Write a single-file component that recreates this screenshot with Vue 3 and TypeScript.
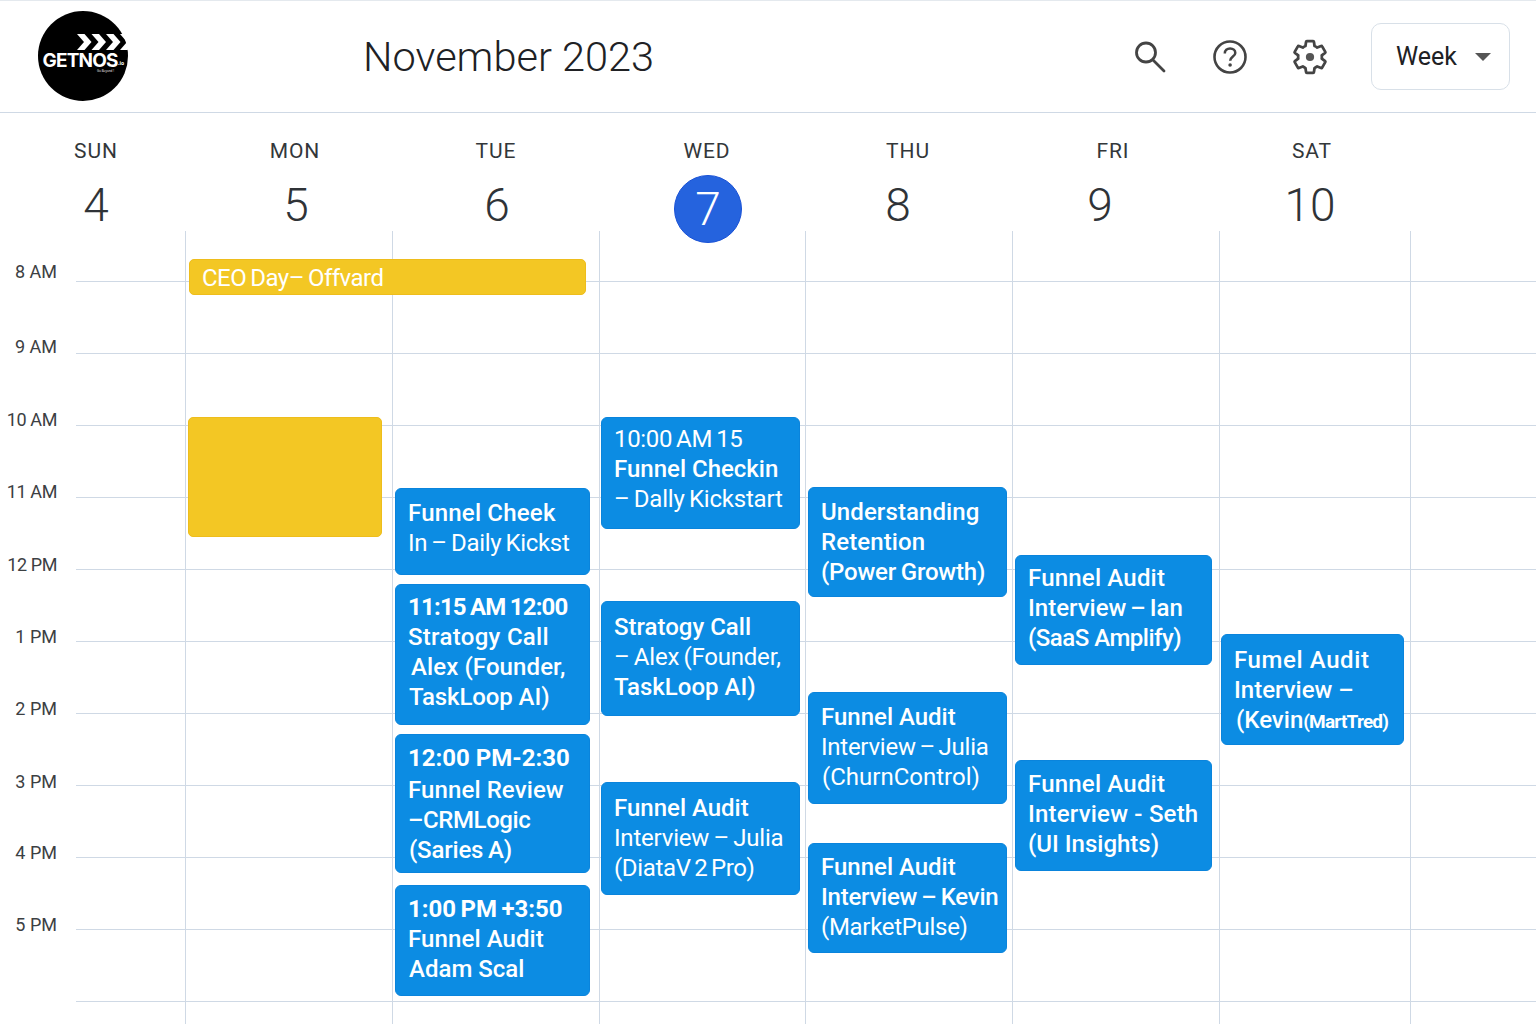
<script setup lang="ts">
interface Line { t: string; bold?: boolean; light?: boolean; small?: string; indent?: number; ls?: number; ws?: number; gap?: number }
interface Ev { x: number; y: number; w: number; h: number; color: 'blue' | 'yellow'; dy?: number; lines: Line[] }

const days = [
  { label: 'SUN', num: '4', nudge: 0 },
  { label: 'MON', num: '5', nudge: 1 },
  { label: 'TUE', num: '6', nudge: 1 },
  { label: 'WED', num: '7', nudge: 1, today: true },
  { label: 'THU', num: '8', nudge: -10 },
  { label: 'FRI', num: '9', nudge: -13 },
  { label: 'SAT', num: '10', nudge: -2 },
]

const hours = [
  { label: '8 AM', h: 50, up: 0 },
  { label: '9 AM', h: 72, up: -3 },
  { label: '10 AM', h: 72, up: -4 },
  { label: '11 AM', h: 72, up: -4 },
  { label: '12 PM', h: 72, up: -5 },
  { label: '1 PM', h: 72, up: -5 },
  { label: '2 PM', h: 72, up: -5 },
  { label: '3 PM', h: 72, up: -6 },
  { label: '4 PM', h: 72, up: -5 },
  { label: '5 PM', h: 72, up: -5 },
  { label: '', h: 72, up: 0 },
]

const events: Ev[] = [
  { x: 189, y: 259, w: 397, h: 36, color: 'yellow', lines: [{ t: 'CEO Day– Offvard', light: true, ws: -1.5, ls: -0.5 }] },
  { x: 188, y: 417, w: 194, h: 120, color: 'yellow', lines: [] },
  { x: 395, y: 488, w: 195, h: 87, color: 'blue', lines: [{ t: 'Funnel Cheek', ls: 0.2 }, { t: 'In – Daily Kickst', light: true, ws: -1.5, ls: -0.3 }] },
  { x: 395, y: 584, w: 195, h: 141, color: 'blue', dy: -2, lines: [{ t: '11:15 AM 12:00', bold: true, ls: -0.8, ws: -1 }, { t: 'Stratogy Call', ls: 0.3 }, { t: 'Alex (Founder,', indent: 3, ls: 0.1 }, { t: 'TaskLoop AI)', indent: 1, ls: -0.1 }] },
  { x: 395, y: 734, w: 195, h: 139, color: 'blue', dy: -1, lines: [{ t: '12:00 PM-2:30', bold: true, gap: 2 }, { t: 'Funnel Review', ls: 0.1 }, { t: '–CRMLogic', ls: -0.4 }, { t: '(Saries A)', indent: 1, ws: -1, ls: -0.2 }] },
  { x: 395, y: 885, w: 195, h: 111, color: 'blue', dy: -1, lines: [{ t: '1:00 PM +3:50', bold: true, ws: -1.5 }, { t: 'Funnel Audit', ls: 0.1 }, { t: 'Adam Scal', indent: 1 }] },
  { x: 601, y: 417, w: 199, h: 112, color: 'blue', dy: -3, lines: [{ t: '10:00 AM 15', light: true, ws: -1.5, ls: -0.35 }, { t: 'Funnel Checkin' }, { t: '– Dally Kickstart', light: true, ws: -1.5, ls: -0.2 }] },
  { x: 601, y: 601, w: 199, h: 115, color: 'blue', dy: 1, lines: [{ t: 'Stratogy Call' }, { t: '– Alex (Founder,', light: true, ws: -1.5, ls: -0.2 }, { t: 'TaskLoop AI)' }] },
  { x: 601, y: 782, w: 199, h: 113, color: 'blue', dy: 1, lines: [{ t: 'Funnel Audit' }, { t: 'Interview – Julia', light: true, ws: -1.5, ls: -0.2 }, { t: '(DiataV 2 Pro)', light: true, ws: -2, ls: -0.35 }] },
  { x: 808, y: 487, w: 199, h: 110, color: 'blue', lines: [{ t: 'Understanding', ls: 0.1 }, { t: 'Retention', ls: 0.1 }, { t: '(Power Growth)', ws: -1, ls: -0.2 }] },
  { x: 808, y: 692, w: 199, h: 112, color: 'blue', lines: [{ t: 'Funnel Audit' }, { t: 'Interview – Julia', light: true, ws: -2, ls: -0.25 }, { t: '(ChurnControl)', light: true, indent: 1 }] },
  { x: 808, y: 843, w: 199, h: 110, color: 'blue', dy: -1, lines: [{ t: 'Funnel Audit' }, { t: 'Interview – Kevin', ws: -1.5, ls: -0.25 }, { t: '(MarketPulse)', light: true, ls: -0.3 }] },
  { x: 1015, y: 555, w: 197, h: 110, color: 'blue', dy: -2, lines: [{ t: 'Funnel Audit', ls: 0.2 }, { t: 'Interview – Ian', ws: -2 }, { t: '(SaaS Amplify)', ls: -0.5 }] },
  { x: 1015, y: 760, w: 197, h: 111, color: 'blue', dy: -1, lines: [{ t: 'Funnel Audit', ls: 0.2 }, { t: 'Interview - Seth', ls: 0.2 }, { t: '(UI Insights)' }] },
  { x: 1221, y: 634, w: 183, h: 111, color: 'blue', dy: 1, lines: [{ t: 'Fumel Audit', ls: 0.6 }, { t: 'Interview –' }, { t: '(Kevin', small: '(MartTred)', indent: 2 }] },
]

const GRID_TOP = 232
const evStyle = (e: Ev) => ({
  left: e.x + 'px',
  top: e.y - GRID_TOP + 'px',
  width: e.w + 'px',
  height: e.h + 'px',
  paddingTop: (e.color === 'blue' ? 9 : 3) + (e.dy ?? 0) + 'px',
})
const lnStyle = (ln: Line) => ({
  paddingLeft: ln.indent ? ln.indent + 'px' : undefined,
  letterSpacing: ln.ls ? ln.ls + 'px' : undefined,
  wordSpacing: ln.ws ? ln.ws + 'px' : undefined,
  marginBottom: ln.gap ? ln.gap + 'px' : undefined,
})
</script>

<template>
  <div class="page">
    <header class="top">
      <svg class="logo" width="92" height="92" viewBox="0 0 92 92" aria-label="GETNOS logo">
        <circle cx="46" cy="46" r="45" fill="#000" />
        <g fill="#fff">
          <path d="M40 24h7.5l7 8-7 8H40l7-8z" />
          <path d="M54.5 24H62l7 8-7 8h-7.5l7-8z" />
          <path d="M69 24h7.5l7 8-7 8H69l7-8z" />
          <path d="M83 24h7.5l7 8-7 8H83l7-8z" />
        </g>
        <text x="5.5" y="56.5" class="logo-main">GETNOS</text>
        <text x="81" y="55" class="logo-io">.io</text>
        <text x="60" y="62" class="logo-tag">Go Beyond !</text>
      </svg>
      <h1 class="title">November 2023</h1>
      <div class="tools">
        <svg class="icon" width="36" height="36" viewBox="0 0 36 36" fill="none" stroke="#444" stroke-width="2.8">
          <circle cx="14" cy="13.5" r="9.5" />
          <path d="M21 21l11 11" stroke-linecap="round" />
        </svg>
        <svg class="icon" width="36" height="36" viewBox="0 0 36 36" fill="none" stroke="#444">
          <circle cx="18" cy="18" r="15.5" stroke-width="2.6" />
          <path d="M12.8 14.4c0-3 2.3-5 5.3-5 3 0 5.2 1.9 5.2 4.5 0 3.6-5.1 3.8-5.1 7.9" stroke-width="2.5" />
          <circle cx="18.1" cy="26" r="1.8" fill="#444" stroke="none" />
        </svg>
        <svg class="icon" width="38" height="38" viewBox="0 0 24 24" fill="none" stroke="#444" stroke-width="1.75" stroke-linejoin="round">
          <path d="M19.43 12.98c.04-.32.07-.64.07-.98 0-.34-.03-.66-.07-.98l2.11-1.65c.19-.15.24-.42.12-.64l-2-3.46c-.12-.22-.39-.3-.61-.22l-2.49 1c-.52-.4-1.08-.73-1.69-.98l-.38-2.65C14.46 2.18 14.25 2 14 2h-4c-.25 0-.46.18-.49.42l-.38 2.65c-.61.25-1.17.59-1.69.98l-2.49-1c-.23-.09-.49 0-.61.22l-2 3.46c-.13.22-.07.49.12.64l2.11 1.65c-.04.32-.07.65-.07.98 0 .33.03.66.07.98l-2.11 1.65c-.19.15-.24.42-.12.64l2 3.46c.12.22.39.3.61.22l2.49-1c.52.4 1.08.73 1.69.98l.38 2.65c.03.24.24.42.49.42h4c.25 0 .46-.18.49-.42l.38-2.65c.61-.25 1.17-.59 1.69-.98l2.49 1c.23.09.49 0 .61-.22l2-3.46c.12-.22.07-.49-.12-.64l-2.11-1.65z" />
          <circle cx="12" cy="12" r="2.6" fill="#555" stroke="none" />
        </svg>
        <button class="view">
          <span>Week</span>
          <svg width="16" height="8" viewBox="0 0 16 8"><path d="M0 0h16l-8 8z" fill="#555" /></svg>
        </button>
      </div>
    </header>

    <div class="days">
      <div v-for="d in days" :key="d.label" class="day">
        <div class="day-label">{{ d.label }}</div>
        <div class="day-num" :class="{ today: d.today }" :style="{ transform: `translateX(${d.nudge}px)` }">{{ d.num }}</div>
      </div>
    </div>

    <div class="grid">
      <div v-for="(h, i) in hours" :key="i" class="hour" :style="{ height: h.h + 'px' }">
        <div class="hour-label" :class="{ wide: h.label.length > 4 }" :style="{ transform: `translateY(${-h.up}px)` }">{{ h.label }}</div>
        <div class="hour-line"></div>
      </div>
      <div class="cols">
        <div class="col"></div>
        <div class="col"></div>
        <div class="col"></div>
        <div class="col"></div>
        <div class="col"></div>
        <div class="col"></div>
        <div class="col"></div>
      </div>
      <div
        v-for="(e, i) in events"
        :key="i"
        class="event"
        :class="e.color"
        :style="evStyle(e)"
      >
        <div
          v-for="(ln, j) in e.lines"
          :key="j"
          class="ln"
          :class="{ bold: ln.bold, light: ln.light }"
          :style="lnStyle(ln)"
        >{{ ln.t }}<span v-if="ln.small" class="small">{{ ln.small }}</span></div>
      </div>
    </div>
  </div>
</template>

<style>
html, body { margin: 0; background: #fff; }
</style>

<style scoped>
.page {
  width: 1536px;
  height: 1024px;
  overflow: hidden;
  background: #fff;
  font-family: Roboto, "Liberation Sans", sans-serif;
  color: #3c4043;
}
.top {
  height: 113px;
  box-sizing: border-box;
  border-top: 1px solid #e4e9ee;
  border-bottom: 1px solid #cfd9e5;
  display: flex;
  align-items: center;
  padding-left: 37px;
  padding-right: 26px;
}
.logo { flex: none; margin-bottom: 2px; }
.logo-main {
  font: 700 19px Inter, "Open Sans", sans-serif;
  letter-spacing: -0.8px;
  fill: #fff;
}
.logo-io { font: 700 5px "Open Sans", sans-serif; fill: #fff; }
.logo-tag { font: 400 3px "Open Sans", sans-serif; fill: #fff; }
.title {
  margin: 0 0 0 234px;
  font-size: 41.5px;
  font-weight: 300;
  color: #202124;
  white-space: nowrap;
}
.tools {
  margin-left: auto;
  display: flex;
  align-items: center;
}
.icon { flex: none; }
.icon:nth-child(1) { margin-right: 44px; }
.icon:nth-child(2) { margin-right: 43px; }
.icon:nth-child(3) { margin-right: 42px; }
.view {
  width: 139px;
  height: 67px;
  box-sizing: border-box;
  border: 1px solid #d8e0e8;
  border-radius: 10px;
  background: #fff;
  font: 400 25px Roboto, sans-serif;
  color: #202124;
  display: flex;
  align-items: center;
  justify-content: space-between;
  padding: 0 18px 0 24px;
}
.days {
  height: 119px;
  display: grid;
  grid-template-columns: 192px 206px 196px 226px 176px 234px 164px;
}
.day {
  display: flex;
  flex-direction: column;
  align-items: center;
  padding-top: 25px;
  box-sizing: border-box;
}
.day-label {
  font-size: 21px;
  line-height: 26px;
  letter-spacing: 0.9px;
  color: #33373a;
}
.day-num {
  width: 68px;
  height: 68px;
  margin-top: 11px;
  display: flex;
  align-items: center;
  justify-content: center;
  font-size: 46px;
  font-weight: 300;
  color: #2f3337;
  box-sizing: border-box;
  padding-bottom: 8px;
}
.day-num.today {
  background: #2563de;
  border: 1px solid #1a52d6;
  border-radius: 50%;
  color: #fff;
  padding-bottom: 0;
}
.grid {
  position: relative;
  height: 792px;
}
.hour {
  display: flex;
  align-items: flex-end;
  box-sizing: border-box;
}
.hour-label {
  width: 57px;
  text-align: right;
  font-size: 18px;
  line-height: 20px;
  color: #3c4043;
  flex: none;
}
.hour-label.wide { letter-spacing: -0.4px; }
.hour-line {
  margin-left: 19px;
  flex: 1;
  height: 1px;
  background: #cfd9e5;
}
.cols {
  position: absolute;
  top: -1px;
  bottom: 0;
  left: 76px;
  display: grid;
  grid-template-columns: 110px 207px 207px 206px 207px 207px 191px;
}
.col { border-right: 1px solid #cfd9e5; }
.event {
  position: absolute;
  box-sizing: border-box;
  border-radius: 6px;
  padding-left: 12px;
  color: #fff;
  font-size: 24px;
  font-weight: 500;
  line-height: 30px;
  white-space: nowrap;
  overflow: hidden;
}
.event.blue {
  background: #0c8ce3;
  border: 1px solid #0a84dc;
}
.event.yellow {
  background: #f3c724;
  border: 1px solid #eebd1c;
  border-radius: 5px;
}
.ln.bold { font-weight: 700; }
.ln.light { font-weight: 400; }
.small { font-size: 19px; letter-spacing: -0.8px; font-weight: 700; }
</style>
